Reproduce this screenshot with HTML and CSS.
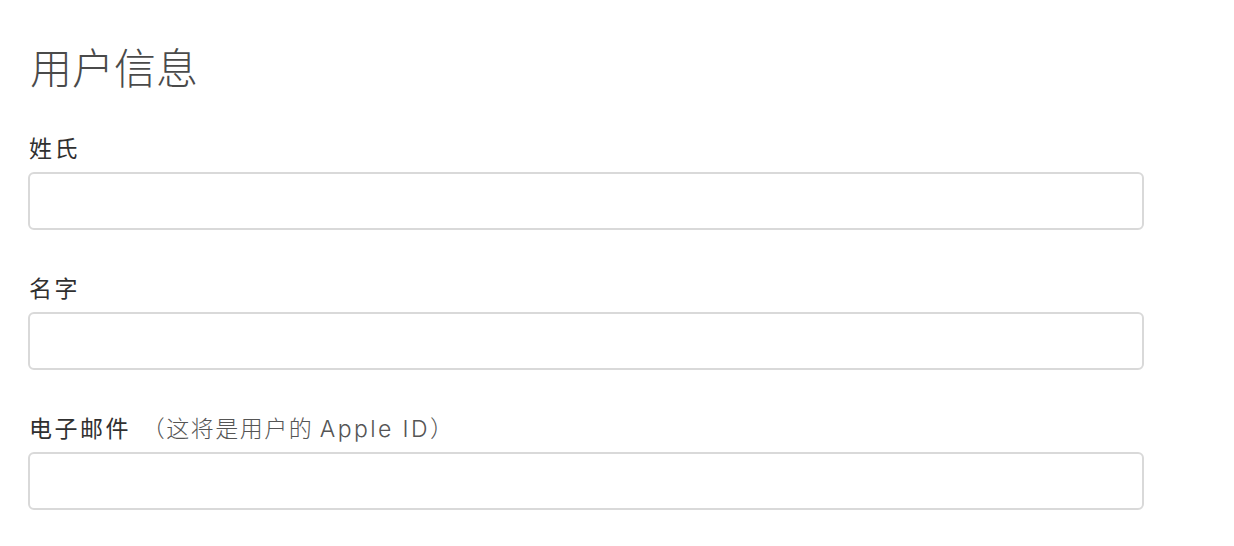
FILE: index.html
```html
<!DOCTYPE html>
<html lang="zh-CN">
<head>
<meta charset="utf-8">
<link rel="stylesheet" href="styles.css">
</head>
<body>
<div class="page">
  <h1 class="title">用户信息</h1>
  <div class="field">
    <label class="label">姓氏</label>
    <input class="input" type="text">
  </div>
  <div class="field">
    <label class="label">名字</label>
    <input class="input" type="text">
  </div>
  <div class="field">
    <label class="label">电子邮件 <span class="hint">（这将是用户的 <span class="latin">Apple ID</span>）</span></label>
    <input class="input" type="text">
  </div>
</div>
</body>
</html>
```
FILE: styles.css
```css
html, body {
  margin: 0;
  padding: 0;
  background: #ffffff;
}
body {
  font-family: "Noto Sans CJK SC", "Noto Sans", sans-serif;
  color: #333333;
}
.page {
  padding: 36px 28px 0 28px;
  width: 1116px;
}
.title {
  margin: 0 0 0 2px;
  font-size: 42px;
  line-height: 60px;
  font-weight: 300;
  color: #4a4a4a;
}
.field {
  display: flex;
  flex-direction: column;
  margin-top: 33px;
}
.field + .field {
  margin-top: 39px;
}
.label {
  margin-left: 1px;
  height: 36px;
  font-size: 23px;
  line-height: 36px;
  font-weight: 400;
  color: #303030;
  letter-spacing: 2.5px;
  margin-bottom: 7px;
  white-space: nowrap;
}
.hint {
  font-size: 23px;
  font-weight: 300;
  color: #555555;
  letter-spacing: 1.5px;
  margin-left: 3px;
}
.latin {
  font-family: "Inter", "Noto Sans CJK SC", sans-serif;
  letter-spacing: 2.4px;
}
.input {
  box-sizing: border-box;
  width: 1116px;
  height: 58px;
  margin: 0;
  border: 2px solid #d9d9d9;
  border-radius: 6px;
  background: #ffffff;
  outline: none;
  font-size: 20px;
}
```
